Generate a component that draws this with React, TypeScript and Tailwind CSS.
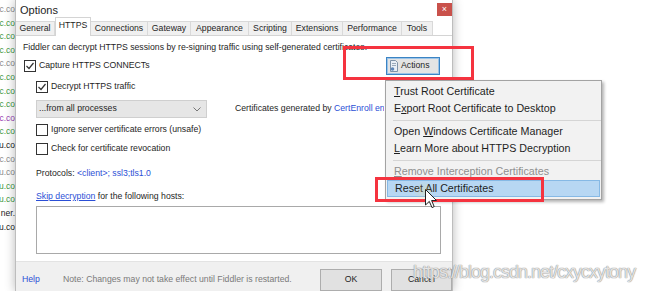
import React from "react";

const hosts: [string, string][] = [
  ["c.co", "text-[#8c8c8c]"],
  ["c.co", "text-[#3f9a3f]"],
  ["c.co", "text-[#3f9a3f]"],
  ["c.co", "text-[#3f9a3f]"],
  ["c.co", "text-[#8c8c8c]"],
  ["c.co", "text-[#3f9a3f]"],
  ["c.co", "text-[#3f9a3f]"],
  ["c.co", "text-[#3f9a3f]"],
  ["c.co", "text-[#9a3fb3]"],
  ["c.co", "text-[#3f9a3f]"],
  ["u.co", "text-[#222]"],
  ["c.co", "text-[#8c8c8c]"],
  ["u.co", "text-[#8c8c8c]"],
  ["u.co", "text-[#3f9a3f]"],
  ["u.co", "text-[#3f9a3f]"],
  ["ner.", "text-[#222]"],
  ["u.co", "text-[#222]"],
];

const tabs = [
  { label: "General", w: "w-[39px]" },
  { label: "HTTPS", w: "w-[36px]", active: true },
  { label: "Connections", w: "w-[57px]" },
  { label: "Gateway", w: "w-[43px]" },
  { label: "Appearance", w: "w-[58px]" },
  { label: "Scripting", w: "w-[43px]" },
  { label: "Extensions", w: "w-[51px]" },
  { label: "Performance", w: "w-[59px]" },
  { label: "Tools", w: "w-[31px]" },
];

const Check = ({ checked }: { checked?: boolean }) => (
  <div className="flex h-[12px] w-[12px] shrink-0 items-center justify-center border border-[#333] bg-white">
    {checked && (
      <svg width="10" height="10" viewBox="0 0 10 10">
        <polyline points="1.5,5 4,7.5 8.5,2" fill="none" stroke="#333" strokeWidth="1.2" />
      </svg>
    )}
  </div>
);

const Ul = ({ children }: { children: React.ReactNode }) => <span className="underline underline-offset-1">{children}</span>;

const App = () => {
  return (
    <div className="relative h-[291px] w-[645px] overflow-hidden bg-white font-['Liberation_Sans',sans-serif] text-[#1e1e1e]">
      <div className="flex h-full">
        {/* host list behind the dialog */}
        <div className="flex w-[15px] shrink-0 flex-col items-end overflow-hidden pt-[3px] text-[8.5px] leading-[13.6px]">
          {hosts.map(([t, c], i) => (
            <div key={i} className={`whitespace-nowrap ${c}`}>
              {t}
            </div>
          ))}
        </div>

        {/* Options dialog */}
        <div className="relative z-0 flex h-[291px] w-[438px] shrink-0 flex-col border-x border-[#bdbdbd] bg-white shadow-[0_0_10px_rgba(0,0,0,0.28)]">
          <div className="flex h-[21px]">
            <div className="pl-[4px] pt-[3px] text-[11px] leading-[14px]">Options</div>
            <div className="ml-auto mt-[3px] flex h-[13px] w-[15px] items-center justify-center bg-[#c9514b] text-[9px] leading-none text-white">×</div>
          </div>

          <div className="text-[8.7px]">
            <div className="flex h-[18px] items-end">
              {tabs.map((t) =>
                t.active ? (
                  <div key={t.label} className={`relative z-10 -mb-px flex h-[19px] items-center justify-center border border-b-0 border-[#d4d4d4] bg-white pb-[2px] ${t.w}`}>
                    {t.label}
                  </div>
                ) : (
                  <div key={t.label} className={`flex h-[14px] items-center justify-center border border-b-0 border-l-0 border-[#d9d9d9] bg-[#f0f0f0] ${t.w}`}>
                    {t.label}
                  </div>
                )
              )}
            </div>

            <div className="flex flex-col border-t border-[#d4d4d4]">
              <div className="mt-[5px] pl-[7px] leading-[12px]">
                Fiddler can decrypt HTTPS sessions by re-signing traffic using self-generated certificates.
              </div>

              <div className="mt-[4px] flex h-[18px] items-center pl-[8px]">
                <Check checked />
                <span className="ml-[3px]">Capture HTTPS CONNECTs</span>
                <div className="ml-auto mr-[12px] flex h-[18px] w-[54px] items-center gap-[2px] border border-[#3b84c4] bg-[#e4e4e4] pl-[2px] shadow-[inset_0_0_0_1px_#9cc4e8]">
                  <svg width="10" height="12" viewBox="0 0 10 12">
                    <path d="M1.5 0.5 H6.5 L8.5 2.5 V11.5 H1.5 Z" fill="#e8eef5" stroke="#7f93a8" />
                    <line x1="3" y1="3.5" x2="7" y2="3.5" stroke="#9aa9b9" />
                    <line x1="3" y1="5.5" x2="7" y2="5.5" stroke="#9aa9b9" />
                    <circle cx="3.5" cy="9" r="1.8" fill="#5e86b8" />
                  </svg>
                  <span>Actions</span>
                </div>
              </div>

              <div className="mt-[5px] flex h-[14px] items-center pl-[20px]">
                <Check checked />
                <span className="ml-[3px]">Decrypt HTTPS traffic</span>
              </div>

              <div className="mt-[6px] flex h-[18px] items-center pl-[20px]">
                <div className="flex h-[18px] w-[171px] items-center justify-between border border-[#cfcfcf] bg-[#e6e6e6] pl-[2px] pr-[5px]">
                  <span>...from all processes</span>
                  <svg width="8" height="5" viewBox="0 0 8 5">
                    <polyline points="0.5,0.5 4,4 7.5,0.5" fill="none" stroke="#777" />
                  </svg>
                </div>
                <span className="ml-[28px] w-[149px] overflow-hidden whitespace-nowrap">
                  Certificates generated by <span className="text-[#2b4fd6]">CertEnroll engine</span>
                </span>
              </div>

              <div className="mt-[5px] flex h-[14px] items-center pl-[20px]">
                <Check />
                <span className="ml-[3px]">Ignore server certificate errors (unsafe)</span>
              </div>

              <div className="mt-[5px] flex h-[14px] items-center pl-[20px]">
                <Check />
                <span className="ml-[3px]">Check for certificate revocation</span>
              </div>

              <div className="mt-[11px] h-[12px] pl-[20px] leading-[12px]">
                Protocols: <span className="text-[#2b4fd6]">&lt;client&gt;; ssl3;tls1.0</span>
              </div>

              <div className="mt-[11px] h-[12px] pl-[20px] leading-[12px]">
                <span className="text-[#2b4fd6] underline">Skip decryption</span> for the following hosts:
              </div>

              <div className="ml-[20px] mt-[4px] h-[48px] w-[405px] border border-[#a9a9a9] bg-white" />
            </div>
          </div>

          <div className="mt-[7px] flex flex-1 items-start border-t border-[#e3e3e3] bg-[#f0f0f0] pt-[7px] text-[8.7px]">
            <span className="mt-[4px] w-[47px] shrink-0 pl-[6px] text-[#2b4fd6]">Help</span>
            <span className="mt-[4px] whitespace-nowrap text-[#7a7a7a]">Note: Changes may not take effect until Fiddler is restarted.</span>
            <div className="ml-auto flex gap-[9px]">
              <div className="flex h-[22px] w-[62px] items-center justify-center border border-[#adadad] bg-[#e1e1e1]">OK</div>
              <div className="flex h-[22px] w-[61px] items-center justify-center border border-[#adadad] bg-[#e1e1e1]">Cancel</div>
            </div>
          </div>
        </div>
        <div className="flex-1" />
      </div>

      {/* red annotation around Actions */}
      <div className="absolute left-[343px] top-[46px] z-10 h-[34px] w-[131px] border-[3px] border-[#f5333f]" />

      {/* Actions context menu */}
      <div className="absolute left-[385px] top-[80px] z-20 w-[217px] border border-[#a3a3a3] bg-[#f2f2f2] py-[2px] text-[10.7px] leading-[17px] shadow-[2px_2px_3px_rgba(0,0,0,0.3)]">
        <div className="h-[17px] pl-[8px]"><Ul>T</Ul>rust Root Certificate</div>
        <div className="h-[17px] pl-[8px]">E<Ul>x</Ul>port Root Certificate to Desktop</div>
        <div className="flex h-[6px] items-center pl-[7px]"><div className="h-px w-full bg-[#d5d5d5]" /></div>
        <div className="h-[17px] pl-[8px]">Open <Ul>W</Ul>indows Certificate Manager</div>
        <div className="h-[17px] pl-[8px]"><Ul>L</Ul>earn More about HTTPS Decryption</div>
        <div className="flex h-[6px] items-center pl-[7px]"><div className="h-px w-full bg-[#d5d5d5]" /></div>
        <div className="h-[17px] pl-[8px] text-[#8f8f8f]"><Ul>R</Ul>emove Interception Certificates</div>
        <div className="mx-[1px] h-[17px] border border-[#86b9e5] bg-[#b7d7f3] pl-[7px] leading-[15px]">Reset All Certificates</div>
      </div>

      {/* red annotation around Reset */}
      <div className="absolute left-[375px] top-[177px] z-30 h-[25px] w-[169px] border-[3px] border-[#f5333f]" />

      {/* cursor with click glow */}
      <div className="absolute left-[414px] top-[181px] z-30 h-[20px] w-[20px] rounded-full bg-[radial-gradient(circle,rgba(250,220,120,0.3)_0%,rgba(250,220,120,0)_70%)]" />
      <svg className="absolute left-[425px] top-[189px] z-40" width="12" height="20" viewBox="0 0 12 20">
        <path d="M0.5 0.5 V16 L4.3 12.4 L7 18.6 L9.2 17.6 L6.6 11.5 H11.5 Z" fill="white" stroke="#222" strokeWidth="1" />
      </svg>

      {/* watermark */}
      <div className="absolute left-[413px] top-[262px] z-40 whitespace-nowrap text-[18px] leading-[20px] tracking-[-1px] text-[rgba(255,255,255,0.75)] [text-shadow:0_0_1px_#8a8a8a,0_0_1px_#8a8a8a]">
        https://blog.csdn.net/cxycxytony
      </div>
    </div>
  );
};

export default App;
